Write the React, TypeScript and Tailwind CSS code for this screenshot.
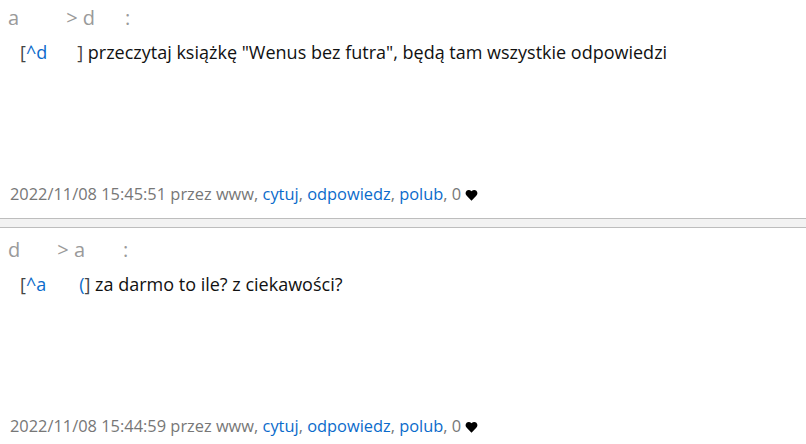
import React from 'react'

type Post = {
  from: string
  fromGap: number
  to: string
  toGap: number
  ref: string
  refGap: number
  refTail?: string
  text: string
  date: string
  first?: boolean
}

const posts: Post[] = [
  {
    from: 'a',
    fromGap: 47,
    to: 'd',
    toGap: 30,
    ref: 'd',
    refGap: 30,
    text: 'przeczytaj książkę "Wenus bez futra", będą tam wszystkie odpowiedzi',
    date: '2022/11/08 15:45:51',
    first: true,
  },
  {
    from: 'd',
    fromGap: 37,
    to: 'a',
    toGap: 38,
    ref: 'a',
    refGap: 33,
    refTail: '(',
    text: 'za darmo to ile? z ciekawości?',
    date: '2022/11/08 15:44:59',
  },
]

function Heart() {
  return (
    <svg viewBox="0 0 24 22" className="inline-block h-[12px] w-[13px] align-[-1px]" fill="black">
      <path d="M12 21.5 3.2 12.6C.4 9.8.4 5.6 3 3.2 5.5.9 9.3 1.2 12 4.3c2.7-3.1 6.5-3.4 9-1.1 2.6 2.4 2.6 6.6-.2 9.4Z" />
    </svg>
  )
}

function PostItem({ post }: { post: Post }) {
  return (
    <div className={`flex flex-col pb-[14px] ${post.first ? 'pt-[5px]' : 'pt-[9px]'}`}>
      {/* author line, names are blanked out */}
      <div className="h-[26px] pl-[8px] text-[20px] leading-[26px] text-[#9a9a9a]">
        <span>{post.from}</span>
        <span className="inline-block" style={{ width: post.fromGap }} />
        <span>&gt; {post.to}</span>
        <span className="inline-block" style={{ width: post.toGap }} />
        <span>:</span>
      </div>

      <div className="mt-[8px] min-h-[145px] pl-[20px] text-[18px] leading-[26px] text-[#111]">
        <span className="text-[#444]">[</span>
        <span className="text-[#0b6bcb]">^{post.ref}</span>
        <span className="inline-block" style={{ width: post.refGap }} />
        {post.refTail && <span className="text-[#0b6bcb]">{post.refTail}</span>}
        <span className="text-[#444]">]</span> {post.text}
      </div>

      <div className="h-[20px] pl-[10px] text-[16.4px] leading-[20px] text-[#777]">
        {post.date} przez www, <a className="text-[#0b6bcb]">cytuj</a>,{' '}
        <a className="text-[#0b6bcb]">odpowiedz</a>, <a className="text-[#0b6bcb]">polub</a>, 0 <Heart />
      </div>
    </div>
  )
}

export default function App() {
  return (
    <div className="h-[444px] w-[806px] overflow-hidden bg-white font-['Open_Sans',sans-serif]">
      {posts.map((post, i) => (
        <React.Fragment key={i}>
          {i > 0 && <div className="h-[10px] border-y border-[#bdbdbd] bg-[#f2f2f2]" />}
          <PostItem post={post} />
        </React.Fragment>
      ))}
    </div>
  )
}
